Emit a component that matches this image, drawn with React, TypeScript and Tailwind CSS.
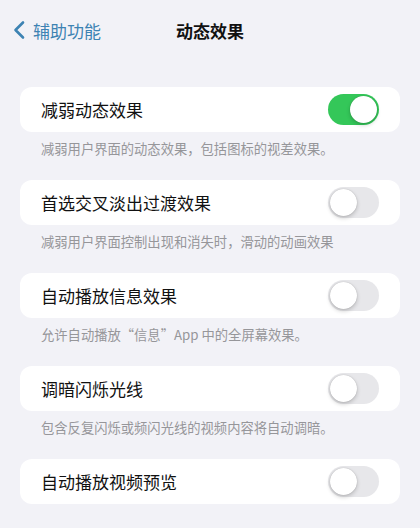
import { useState } from "react";

type Item = {
  id: string;
  label: string;
  note?: string;
  on: boolean;
};

const items: Item[] = [
  { id: "reduce", label: "减弱动态效果", note: "减弱用户界面的动态效果，包括图标的视差效果。", on: true },
  { id: "crossfade", label: "首选交叉淡出过渡效果", note: "减弱用户界面控制出现和消失时，滑动的动画效果", on: false },
  { id: "messages", label: "自动播放信息效果", note: "允许自动播放“信息”App 中的全屏幕效果。", on: false },
  { id: "flash", label: "调暗闪烁光线", note: "包含反复闪烁或频闪光线的视频内容将自动调暗。", on: false },
  { id: "video", label: "自动播放视频预览", on: false },
];

const font = { fontFamily: '"Noto Sans CJK SC", "Noto Sans", sans-serif' };

function Toggle({ on, onClick }: { on: boolean; onClick: () => void }) {
  return (
    <button
      onClick={onClick}
      className={`relative w-[51px] h-[31px] rounded-full shrink-0 transition-colors ${on ? "bg-[#34c759]" : "bg-[#e7e7ea]"}`}
    >
      <span
        className={`absolute top-[2px] w-[27px] h-[27px] rounded-full bg-white shadow-[0_2px_4px_rgba(0,0,0,0.2),0_0_1px_rgba(0,0,0,0.25)] transition-all ${on ? "left-[22px]" : "left-[2px]"}`}
      />
    </button>
  );
}

export default function App() {
  const [state, setState] = useState<Record<string, boolean>>(
    Object.fromEntries(items.map((i) => [i.id, i.on]))
  );

  return (
    <div className="w-[420px] h-[528px] bg-[#f2f2f7] overflow-hidden" style={font}>
      <header className="relative h-[60px] flex items-center justify-center">
        <div className="absolute left-[12px] top-0 h-full flex items-center gap-[7px] text-[#3d83b3]">
          <svg width="14" height="20" viewBox="0 0 14 20" fill="none">
            <path d="M11 2.5L3.5 10L11 17.5" stroke="currentColor" strokeWidth="2.6" strokeLinecap="round" strokeLinejoin="round" />
          </svg>
          <span className="text-[17px] leading-none">辅助功能</span>
        </div>
        <h1 className="text-[17px] font-semibold leading-none text-[#111]">动态效果</h1>
      </header>

      <main className="pt-[27px] px-[20px] flex flex-col">
        {items.map((item) => (
          <section key={item.id} className="h-[93px]">
            <div className="h-[45px] bg-white rounded-[12px] flex items-center justify-between pl-[21px] pr-[21px]">
              <span className="text-[17px] text-[#111]">{item.label}</span>
              <Toggle
                on={state[item.id]}
                onClick={() => setState((s) => ({ ...s, [item.id]: !s[item.id] }))}
              />
            </div>
            {item.note && (
              <p className="pt-[8px] pl-[21px] text-[13.3px] leading-[18px] text-[#96969a]">{item.note}</p>
            )}
          </section>
        ))}
      </main>
    </div>
  );
}
